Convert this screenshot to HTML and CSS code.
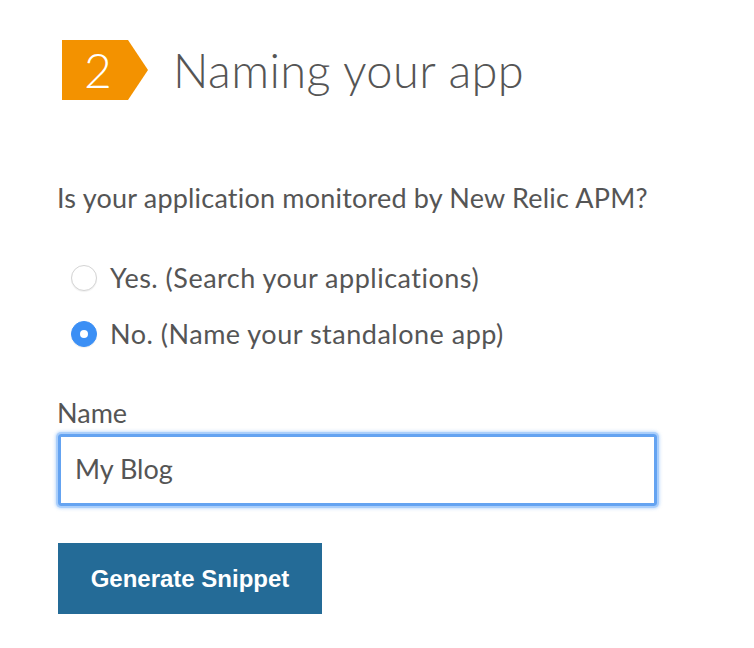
FILE: index.html
```html
<!DOCTYPE html>
<html lang="en">
<head>
<meta charset="utf-8">
<title>Naming your app</title>
<link rel="stylesheet" href="styles.css">
</head>
<body>
<div class="page">
  <div class="step-header">
    <div class="step-badge"><span class="step-num">2</span></div>
    <h1 class="step-title">Naming your app</h1>
  </div>

  <p class="question">Is your application monitored by New Relic APM?</p>

  <div class="options">
    <label class="option">
      <span class="radio"></span>
      <span class="option-text">Yes. (Search your applications)</span>
    </label>
    <label class="option">
      <span class="radio radio-checked"><span class="radio-dot"></span></span>
      <span class="option-text">No. (Name your standalone app)</span>
    </label>
  </div>

  <div class="field">
    <div class="field-label">Name</div>
    <div class="text-input">My Blog</div>
  </div>

  <div class="actions">
    <button class="btn-primary" type="button">Generate Snippet</button>
  </div>
</div>
</body>
</html>
```

FILE: styles.css
```css
html, body {
  margin: 0;
  padding: 0;
  background: #ffffff;
}

.page {
  padding: 40px 0 0 57px;
  font-family: "Lato", "Open Sans", sans-serif;
  font-variant-ligatures: none;
  color: #555555;
  display: flex;
  flex-direction: column;
  align-items: flex-start;
}

.step-header {
  display: flex;
  align-items: center;
  height: 60px;
}

.step-badge {
  width: 86px;
  height: 60px;
  margin-left: 5px;
  background: #f39200;
  clip-path: polygon(0 0, 66px 0, 86px 50%, 66px 100%, 0 100%);
  display: flex;
  align-items: center;
}

.step-num {
  width: 72px;
  text-align: center;
  color: #ffffff;
  font-weight: 300;
  font-size: 48px;
  line-height: 60px;
}

.step-title {
  margin: 0 0 0 25px;
  font-weight: 300;
  font-size: 47px;
  letter-spacing: 0.4px;
  line-height: 60px;
  color: #555555;
}

.question {
  margin: 82px 0 0 0;
  font-size: 27px;
  letter-spacing: 0.2px;
  line-height: 32px;
}

.options {
  margin-top: 48px;
  display: flex;
  flex-direction: column;
  gap: 24px;
}

.option {
  display: flex;
  align-items: center;
  gap: 13px;
  height: 32px;
  margin-left: 14px;
}

.radio {
  width: 24px;
  height: 24px;
  border-radius: 50%;
  border: 1px solid #d4d4d4;
  background: #ffffff;
  box-shadow: 0 1px 1px rgba(0,0,0,0.06);
  display: flex;
  align-items: center;
  justify-content: center;
  flex: none;
}

.radio-checked {
  background: #3b8ff5;
  border-color: #3b8ff5;
}

.radio-dot {
  width: 8px;
  height: 8px;
  border-radius: 50%;
  background: #ffffff;
}

.option-text {
  font-size: 27px;
  letter-spacing: 0.5px;
  line-height: 32px;
}

.field {
  margin-top: 48px;
  display: flex;
  flex-direction: column;
}

.field-label {
  font-size: 27px;
  line-height: 30px;
}

.text-input {
  margin-top: 6px;
  margin-left: 1px;
  box-sizing: border-box;
  width: 599px;
  height: 72px;
  border: 3px solid #64a3f1;
  border-radius: 3px;
  box-shadow: 0 0 0 2px rgba(150, 195, 250, 0.65), 0 0 3px 3px rgba(150, 195, 250, 0.5);
  padding: 0 14px;
  font-size: 27px;
  line-height: 64px;
  color: #555555;
}

.actions {
  margin-top: 37px;
  margin-left: 1px;
}

.btn-primary {
  width: 264px;
  height: 71px;
  border: none;
  border-radius: 0;
  background: #246b97;
  color: #ffffff;
  font-family: "Liberation Sans", Arial, sans-serif;
  font-weight: bold;
  font-size: 24px;
  padding: 0;
}
```
